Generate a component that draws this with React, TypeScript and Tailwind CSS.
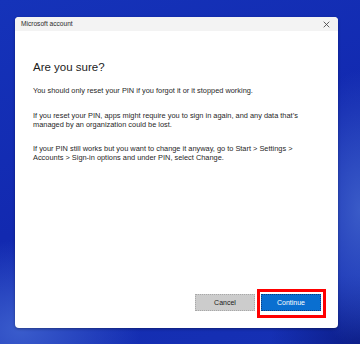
export default function App() {
  return (
    <div
      className="w-[360px] h-[344px] overflow-hidden pt-[17px] pl-[15px] font-['Liberation_Sans',Arial,sans-serif]"
      style={{
        background:
          "radial-gradient(ellipse 120px 90px at 20px 330px, #3a5ccc 0%, rgba(58,92,204,0) 100%), radial-gradient(ellipse 60px 140px at 360px 210px, #3a5bc8 0%, rgba(58,91,200,0) 100%), radial-gradient(ellipse 90px 70px at 360px 344px, #0b1c86 0%, rgba(11,28,134,0) 100%), linear-gradient(160deg, #1533b9 0%, #1229b0 50%, #1631b4 100%)",
      }}
    >
      <div className="w-[323px] h-[311px] bg-white rounded-[4px] flex flex-col overflow-hidden shadow-[0_1px_3px_rgba(0,0,0,0.35)]">
        {/* TITLE BAR */}
        <div className="h-[14px] bg-[#f3f3f3] flex items-center justify-between pl-[6px] pr-[8px]">
          <span className="text-[6.6px] leading-none text-[#2b2b2b]">Microsoft account</span>
          <svg width="7" height="7" viewBox="0 0 10 10" className="mt-[1px]">
            <path d="M1 1 L9 9 M9 1 L1 9" stroke="#444" strokeWidth="1.2" />
          </svg>
        </div>

        {/* CONTENT */}
        <div className="pl-[18px] pr-[20px] pt-[29px] text-[#1f1f1f]">
          <h1 className="text-[11.5px] leading-[14px] font-light text-[#1b1b1b]">Are you sure?</h1>
          <p className="mt-[12px] text-[7.4px] leading-[9px] w-[266px]">
            You should only reset your PIN if you forgot it or it stopped working.
          </p>
          <p className="mt-[16px] text-[7.4px] leading-[9px] w-[266px]">
            If you reset your PIN, apps might require you to sign in again, and any data that’s managed by an organization could be lost.
          </p>
          <p className="mt-[15px] text-[7.4px] leading-[9px] w-[266px]">
            If your PIN still works but you want to change it anyway, go to Start &gt; Settings &gt; Accounts &gt; Sign-in options and under PIN, select Change.
          </p>
        </div>

        {/* BUTTONS */}
        <div className="mt-auto flex items-end justify-end gap-[6px] pr-[17px] pb-[17px]">
          <button className="flex items-center justify-center w-[60px] h-[17px] bg-[#cccccc] border border-dotted border-[#a8a8a8] text-[7px] leading-none text-[#1b1b1b]">
            Cancel
          </button>
          <div className="relative flex">
            <button className="flex items-center justify-center w-[60px] h-[17px] bg-[#0a6fd0] border border-dotted border-[#0b3f80] text-[7px] leading-none text-white">
              Continue
            </button>
            <span className="absolute -left-[4px] -right-[5px] -top-[5px] -bottom-[7px] border-[3px] border-[#ff0000] pointer-events-none" />
          </div>
        </div>
      </div>
    </div>
  );
}
